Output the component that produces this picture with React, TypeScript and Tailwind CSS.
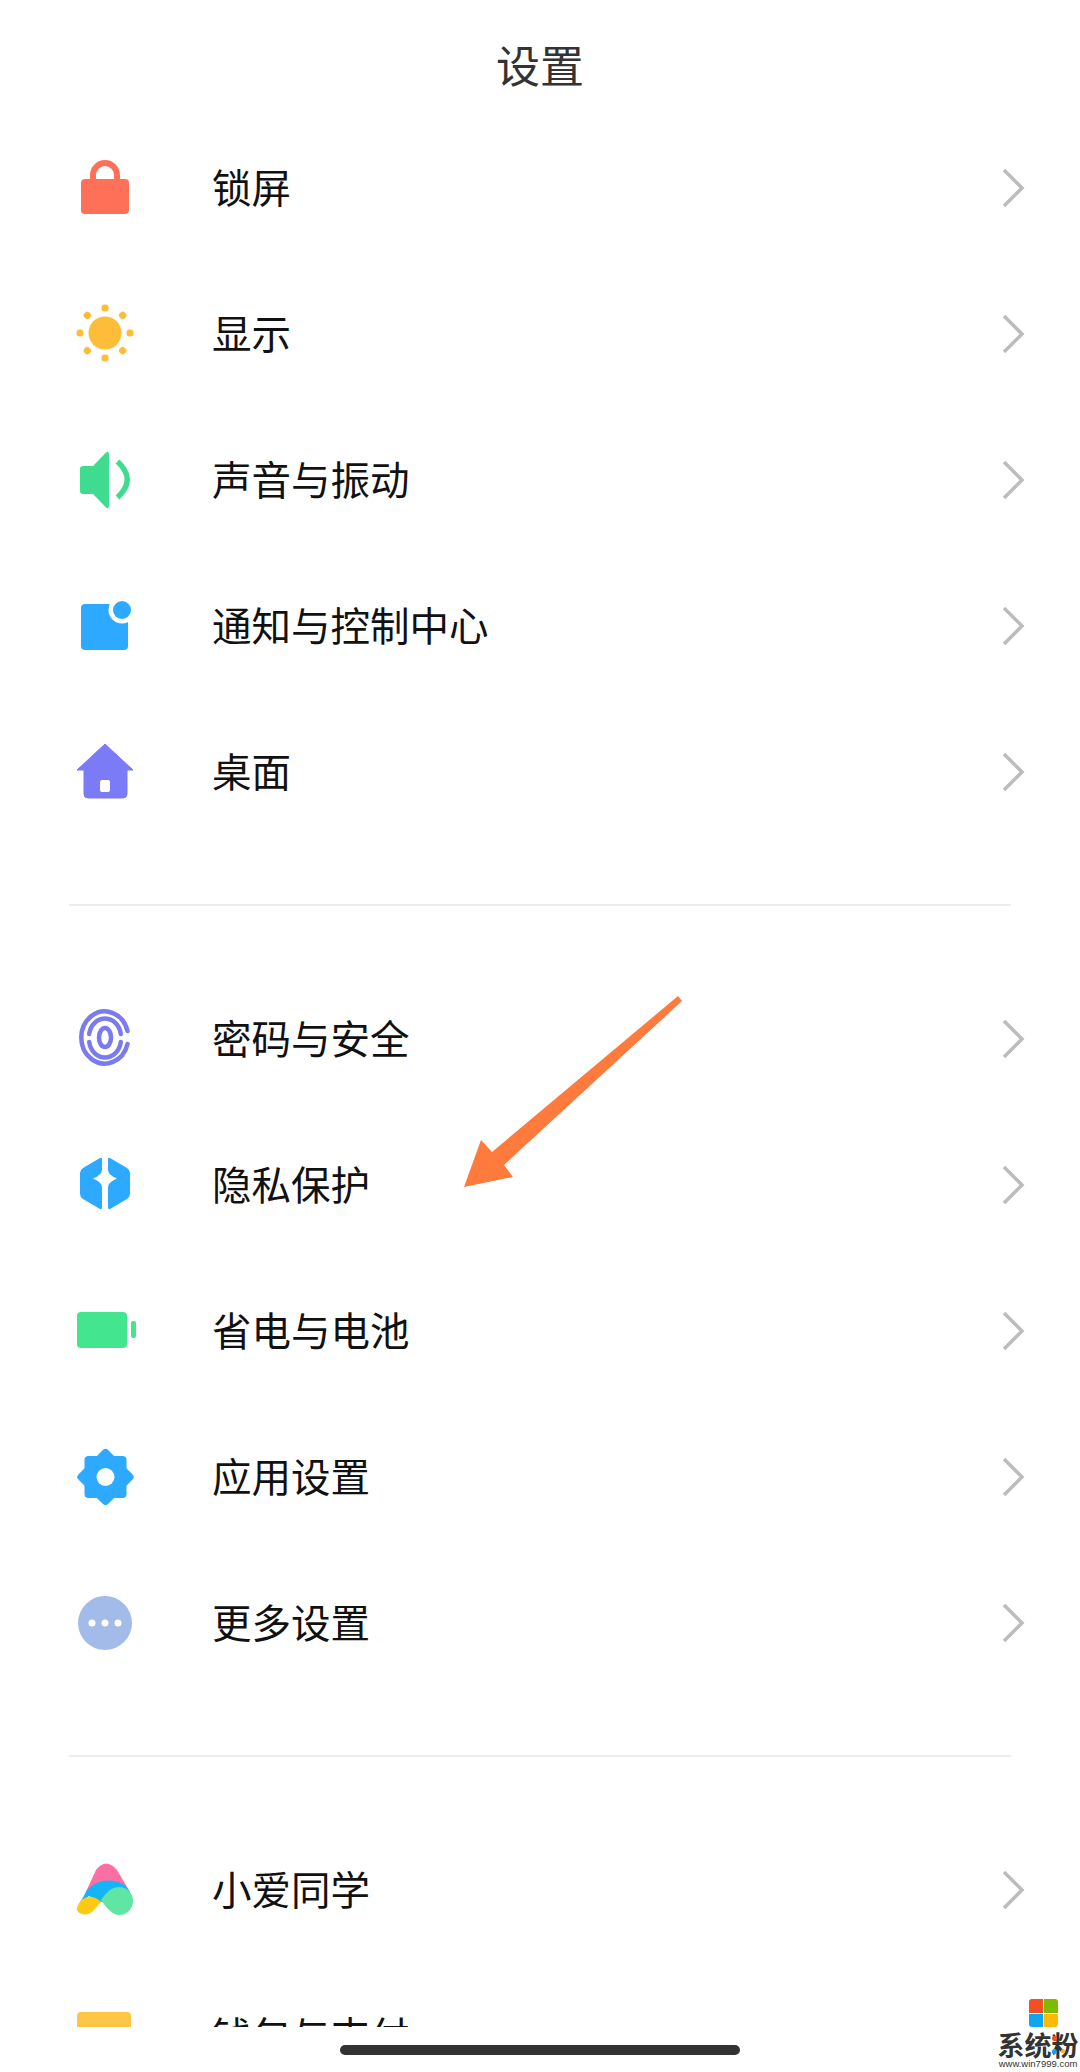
import type { ReactNode } from 'react';

const Icon = ({ children }: { children: ReactNode }) => (
    <svg viewBox="0 0 80 80" className="w-20 h-20 shrink-0">{children}</svg>
);

const LockIcon = () => (
    <Icon>
        <path d="M28 34V27a12 12 0 0 1 24 0v7" fill="none" stroke="#ff7059" strokeWidth="6" />
        <rect x="16" y="31" width="48" height="35" rx="4" fill="#ff7059" />
    </Icon>
);

const SunIcon = () => (
    <Icon>
        <circle cx="40" cy="39" r="16.5" fill="#fdbd39" />
        {[0, 45, 90, 135, 180, 225, 270, 315].map((a) => (
            <rect key={a} x="36.5" y="10.5" width="7" height="7" rx="3" fill="#fdbd39" transform={`rotate(${a} 40 39)`} />
        ))}
    </Icon>
);

const SoundIcon = () => (
    <Icon>
        <path
            d="M18 26h10L41 12.500q3-2 3 2V65.500q0 4-3 2L28 54H18q-3 0-3-3V29q0-3 3-3z"
            fill="#3fdc8f"
        />
        <path d="M52.500 21.500Q72 39.500 52.500 57.500" fill="none" stroke="#3fdc8f" strokeWidth="5.500" />
    </Icon>
);

const NoticeIcon = () => (
    <Icon>
        <rect x="16" y="18" width="47" height="46" rx="4" fill="#2daaff" />
        <circle cx="57" cy="24" r="13.500" fill="#fff" />
        <circle cx="57" cy="24" r="9" fill="#2daaff" />
    </Icon>
);

const HomeIcon = () => (
    <Icon>
        <path
            d="M40 12L68 38H62V62q0 4-4 4H23q-4 0-4-4V38H12z"
            fill="#7b7bf7"
            stroke="#7b7bf7"
            strokeWidth="1"
            strokeLinejoin="round"
        />
        <rect x="35" y="48" width="10" height="12" rx="2" fill="#fff" />
    </Icon>
);

const FingerprintIcon = () => (
    <Icon>
        <g fill="none" stroke="#7b7bf0" strokeWidth="4.500" strokeLinecap="round">
            <path d="M62.500 32A23.500 26 0 1 0 62.500 45" />
            <path d="M24.200 35A16 18.500 0 0 1 55.800 35" />
            <path d="M24.200 43A16 18.500 0 0 0 55.800 43" />
            <ellipse cx="40" cy="38.500" rx="6" ry="9.500" />
        </g>
    </Icon>
);

const PrivacyIcon = () => (
    <Icon>
        <path
            d="M35 13L18 23q-3 2-3 5V49q0 3 3 5L35 64q2 1 2-2V43q0-4-3-6-2-2-6-3.500 4-1.500 6-3.500 3-2 3-6V14q0-2-2-1z"
            fill="#2daaff"
        />
        <path
            d="M45 13L62 23q3 2 3 5V49q0 3-3 5L45 64q-2 1-2-2V43q0-4 3-6 2-2 6-3.500-4-1.500-6-3.500-3-2-3-6V14q0-2 2-1z"
            fill="#2daaff"
        />
    </Icon>
);

const BatteryIcon = () => (
    <Icon>
        <rect x="12" y="21" width="50" height="36" rx="4" fill="#44e58f" />
        <rect x="66" y="30" width="5" height="17" rx="2" fill="#44e58f" />
    </Icon>
);

const GearIcon = () => (
    <Icon>
        <rect x="19.500" y="19" width="42" height="42" rx="4" fill="#2daaff" />
        <rect x="19.500" y="19" width="42" height="42" rx="4" fill="#2daaff" transform="rotate(45 40.500 40)" />
        <circle cx="40.500" cy="40" r="9" fill="#fff" />
    </Icon>
);

const MoreIcon = () => (
    <Icon>
        <circle cx="40" cy="40" r="27" fill="#a3bbe9" />
        <circle cx="27" cy="40" r="3.500" fill="#fff" />
        <circle cx="40" cy="40" r="3.500" fill="#fff" />
        <circle cx="53" cy="40" r="3.500" fill="#fff" />
    </Icon>
);

const AssistantIcon = () => (
    <Icon>
        <path d="M31 20Q41 7 52 20L65 42L20 44z" fill="#fc6fa4" />
        <path d="M15 53L22 40Q38 24 60 35L65 42L54 50L36 52L24 46z" fill="#14b4f9" />
        <path d="M12 58Q15 47 25 47Q31 47 36 52L28 61Q23 66 17 64Q11 62 12 58z" fill="#fdca13" />
        <path d="M36 50Q44 37 54 37A14 14 0 0 1 54 65Q46 65 36 50z" fill="#5fe6a4" />
    </Icon>
);

const WalletIcon = () => (
    <Icon>
        <rect x="12" y="16" width="54" height="50" rx="4" fill="#ffc646" />
    </Icon>
);

const Chevron = () => (
    <svg viewBox="0 0 24 40" className="w-6 h-10 shrink-0 ml-auto">
        <path d="M3 2L21 20L3 38" fill="none" stroke="#bcbcbc" strokeWidth="3.500" />
    </svg>
);

const Row = ({ icon, label }: { icon: ReactNode; label: string }) => (
    <div className="flex items-center h-[146px] pl-[65px] pr-[55px]">
        {icon}
        <span className="ml-[67px] -mt-[4px] text-[39.500px] leading-none text-[#111]">{label}</span>
        <Chevron />
    </div>
);

const Divider = () => <div className="h-[2px] mx-[69px] mt-[59px] mb-[60px] bg-[#ededed]" />;

const group1 = [
    { icon: <LockIcon />, label: '锁屏' },
    { icon: <SunIcon />, label: '显示' },
    { icon: <SoundIcon />, label: '声音与振动' },
    { icon: <NoticeIcon />, label: '通知与控制中心' },
    { icon: <HomeIcon />, label: '桌面' },
];

const group2 = [
    { icon: <FingerprintIcon />, label: '密码与安全' },
    { icon: <PrivacyIcon />, label: '隐私保护' },
    { icon: <BatteryIcon />, label: '省电与电池' },
    { icon: <GearIcon />, label: '应用设置' },
    { icon: <MoreIcon />, label: '更多设置' },
];

const group3 = [
    { icon: <AssistantIcon />, label: '小爱同学' },
    { icon: <WalletIcon />, label: '钱包与支付' },
];

// Annotation arrow that sits on top of the list
const PointerArrow = () => (
    <svg viewBox="0 0 230 200" className="absolute left-[460px] top-[990px] w-[230px] h-[200px]">
        <path d="M4 197L21 150L32 162L218 6L222 11L44 175L53 187z" fill="#ff7a3d" />
    </svg>
);

const Watermark = () => (
    <div className="absolute right-0 bottom-0 w-[86px] h-[73px] pl-[2px] bg-white flex flex-col items-center">
        <div className="grid grid-cols-2 gap-[1px] w-[29px] h-[28px] ml-[10px] mb-[5px] shrink-0">
            <div className="bg-[#f25022] rounded-tl-[3px]" />
            <div className="bg-[#7fba00] rounded-tr-[3px]" />
            <div className="bg-[#0ea5f5] rounded-bl-[3px]" />
            <div className="bg-[#ffb900] rounded-br-[3px]" />
        </div>
        <div className="relative text-[27px] leading-[26px] font-bold text-[#333] whitespace-nowrap">
            系统粉
            <div className="absolute left-[54px] top-[4px] w-[5px] h-[5px] rounded-full bg-[#f25022]" />
            <div className="absolute left-[54px] top-[17px] w-[5px] h-[5px] rounded-full bg-[#0ea5f5]" />
            <div className="absolute left-[63px] top-[17px] w-[4px] h-[4px] rounded-full bg-[#ffb900]" />
        </div>
        <div className="text-[9.500px] leading-[11px] text-[#333] whitespace-nowrap font-['Liberation_Sans',sans-serif]">
            www.win7999.com
        </div>
    </div>
);

export default function App() {
    return (
        <div className="relative w-[1080px] h-[2072px] flex flex-col bg-white overflow-hidden font-['Noto_Sans_CJK_SC','Noto_Sans',sans-serif]">
            <div className="flex-1 min-h-0 overflow-hidden">
                <div className="h-[115px] flex items-center justify-center pt-[12px] text-[44px] leading-none text-[#333]">
                    设置
                </div>
                {group1.map((r) => <Row key={r.label} {...r} />)}
                <Divider />
                {group2.map((r) => <Row key={r.label} {...r} />)}
                <Divider />
                {group3.map((r) => <Row key={r.label} {...r} />)}
            </div>
            <div className="h-[45px] shrink-0 flex justify-center pt-[18px]">
                <div className="w-[400px] h-[10px] rounded-full bg-[#333]" />
            </div>
            <PointerArrow />
            <Watermark />
        </div>
    );
}
